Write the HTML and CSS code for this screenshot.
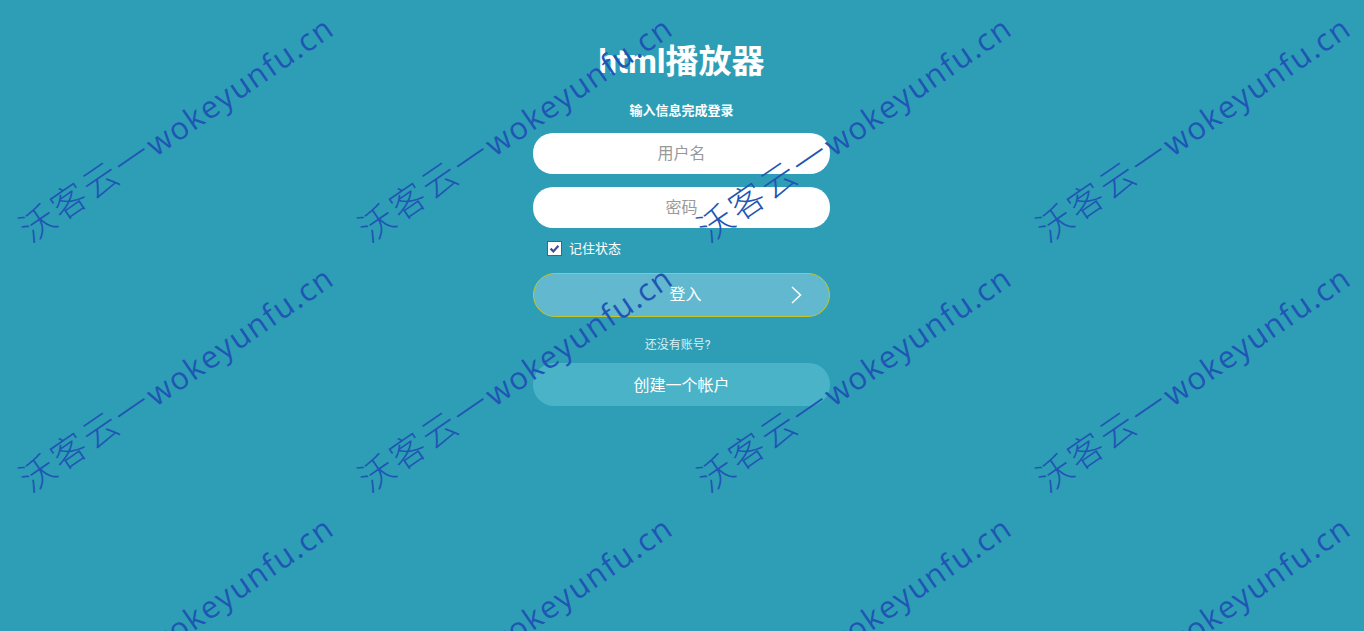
FILE: index.html
```html
<!DOCTYPE html>
<html lang="zh-CN">
<head>
    <meta charset="UTF-8">
    <meta name="viewport" content="width=device-width, initial-scale=1.0">
    <title>html播放器</title>
    <link rel="stylesheet" href="styles.css">
</head>
<body>
    <div class="login">
        <h1 class="login-title">html播放器</h1>
        <p class="login-sub">输入信息完成登录</p>
        <form class="login-form">
            <input class="field" type="text" placeholder="用户名">
            <input class="field" type="password" placeholder="密码">
            <label class="remember">
                <span class="remember-box">
                    <svg viewBox="0 0 13 13" width="13" height="13"><path d="M2.6 6.6 L5.4 9.4 L10.4 3.8" fill="none" stroke="#3f4f96" stroke-width="2.2"/></svg>
                </span>
                <span class="remember-text">记住状态</span>
            </label>
            <button class="btn-login" type="button">
                <span class="btn-login-text">登入</span>
                <svg viewBox="0 0 12 18" width="12" height="18"><path d="M2 1 L10.5 9 L2 17" fill="none" stroke="#fff" stroke-width="1.5"/></svg>
            </button>
            <p class="no-account">还没有账号?</p>
            <button class="btn-create" type="button">创建一个帐户</button>
        </form>
    </div>

    <!-- watermark tiles, on top of everything -->
    <div class="watermarks">
        <div class="wm"><span class="wm-text"><span class="wm-cn">沃客云一</span>wokeyunfu.cn</span></div>
        <div class="wm"><span class="wm-text"><span class="wm-cn">沃客云一</span>wokeyunfu.cn</span></div>
        <div class="wm"><span class="wm-text"><span class="wm-cn">沃客云一</span>wokeyunfu.cn</span></div>
        <div class="wm"><span class="wm-text"><span class="wm-cn">沃客云一</span>wokeyunfu.cn</span></div>
        <div class="wm"><span class="wm-text"><span class="wm-cn">沃客云一</span>wokeyunfu.cn</span></div>
        <div class="wm"><span class="wm-text"><span class="wm-cn">沃客云一</span>wokeyunfu.cn</span></div>
        <div class="wm"><span class="wm-text"><span class="wm-cn">沃客云一</span>wokeyunfu.cn</span></div>
        <div class="wm"><span class="wm-text"><span class="wm-cn">沃客云一</span>wokeyunfu.cn</span></div>
        <div class="wm"><span class="wm-text"><span class="wm-cn">沃客云一</span>wokeyunfu.cn</span></div>
        <div class="wm"><span class="wm-text"><span class="wm-cn">沃客云一</span>wokeyunfu.cn</span></div>
        <div class="wm"><span class="wm-text"><span class="wm-cn">沃客云一</span>wokeyunfu.cn</span></div>
        <div class="wm"><span class="wm-text"><span class="wm-cn">沃客云一</span>wokeyunfu.cn</span></div>
    </div>
</body>
</html>
```

FILE: styles.css
```css
html, body {
    height: 100%;
}
body {
    margin: 0;
    padding-right: 1px;
    background-color: #2e9eb6;
    color: #fff;
    font-family: "Roboto", "Noto Sans CJK SC", sans-serif;
    overflow: hidden;
    position: relative;
}
.login {
    width: 297px;
    margin: 0 auto;
    padding-top: 40px;
    display: flex;
    flex-direction: column;
    align-items: center;
}
.login-title {
    margin: 0;
    font-size: 33px;
    line-height: 44px;
    font-weight: 700;
}
.login-sub {
    margin: 18px 0 0;
    font-size: 13px;
    line-height: 18px;
    font-weight: 700;
}
.login-form {
    width: 100%;
    margin-top: 13px;
    display: flex;
    flex-direction: column;
}
.field {
    height: 41px;
    box-sizing: border-box;
    margin-bottom: 13px;
    border: none;
    border-radius: 20px;
    background-color: #fff;
    text-align: center;
    font-family: inherit;
    font-size: 16px;
    outline: none;
}
.field::placeholder {
    color: #999;
}
.remember {
    display: flex;
    align-items: center;
    gap: 7px;
    margin: -1px 0 17px 14px;
    height: 16px;
    font-size: 13px;
}
.remember-box {
    width: 15px;
    height: 15px;
    box-sizing: border-box;
    background-color: #fff;
    border: 1px solid #4a5a9a;
    display: flex;
}
.remember-text {
    padding-bottom: 2px;
}
.btn-login {
    height: 44px;
    box-sizing: border-box;
    padding: 0 27px 0 47px;
    display: flex;
    align-items: center;
    border: 1px solid #c3c62a;
    border-radius: 22px;
    background-color: #62b8ce;
    color: #fff;
    font-family: inherit;
    font-size: 16px;
}
.btn-login-text {
    flex: 1;
    text-align: center;
    padding-bottom: 4px;
}
.no-account {
    margin: 19px 0 0;
    padding-right: 8px;
    text-align: center;
    font-size: 12px;
    line-height: 18px;
    color: #d5eff5;
}
.btn-create {
    height: 43px;
    margin-top: 9px;
    padding: 0 0 2px;
    border: none;
    border-radius: 21px;
    background-color: #4ab3c8;
    color: #fff;
    font-family: inherit;
    font-size: 16px;
}
.watermarks {
    position: absolute;
    top: 0;
    left: 0;
    width: 100%;
    height: 100%;
    overflow: hidden;
    padding: 0 5px;
    box-sizing: border-box;
    display: grid;
    grid-template-columns: repeat(4, 339px);
    grid-auto-rows: 250px;
    pointer-events: none;
}
.wm {
    display: flex;
    align-items: center;
    justify-content: center;
}
.wm-text {
    white-space: nowrap;
    font-family: "Open Sans", "Noto Sans CJK SC", sans-serif;
    font-size: 31px;
    letter-spacing: 1.5px;
    color: #1f56b4;
    transform: rotate(-34.5deg);
}
.wm-cn {
    font-size: 35px;
    font-weight: 300;
    letter-spacing: 3px;
}
```
